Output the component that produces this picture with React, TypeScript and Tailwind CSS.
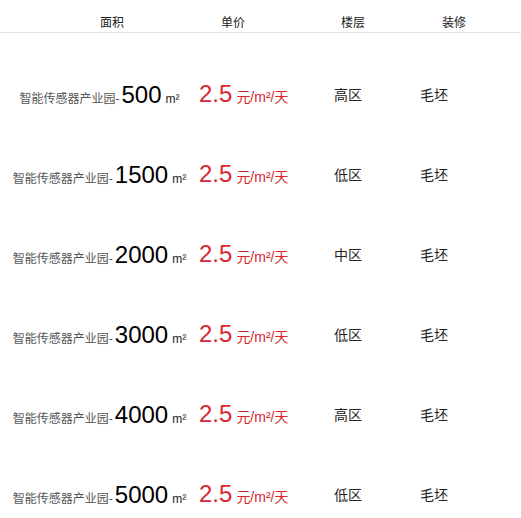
const rows = [
  { area: "500", floor: "高区" },
  { area: "1500", floor: "低区" },
  { area: "2000", floor: "中区" },
  { area: "3000", floor: "低区" },
  { area: "4000", floor: "高区" },
  { area: "5000", floor: "低区" },
];

export default function App() {
  return (
    <div
      className="w-[521px] bg-white text-[#333]"
      style={{ fontFamily: '"Liberation Sans", Arial, "Noto Sans CJK SC", sans-serif' }}
    >
      <div className="flex h-[33px] items-start border-b border-[#e5e5e5] pt-[15px] pl-[52px] text-[12px] leading-[16px] text-[#222]">
        <div className="w-[120px] text-center">面积</div>
        <div className="w-[122px] text-center">单价</div>
        <div className="w-[118px] text-center">楼层</div>
        <div className="w-[84px] text-center">装修</div>
      </div>
      <div className="pt-[22px]">
        {rows.map((r, i) => (
          <div key={i} className="flex h-[80px] items-center">
            <div className="flex w-[199px] items-baseline justify-center whitespace-nowrap">
              <span className="text-[12px] text-[#555]">智能传感器产业园-</span>
              <span className="ml-[2px] text-[24px] leading-none text-black">{r.area}</span>
              <span className="ml-[4px] text-[12px] text-[#222]">m²</span>
            </div>
            <div className="flex w-[121px] items-baseline whitespace-nowrap text-[#d9262c]">
              <span className="text-[24px] leading-none">2.5</span>
              <span className="ml-[4px] text-[14px]">元/m²/天</span>
            </div>
            <div className="w-[56px] text-center text-[14px] text-[#222]">{r.floor}</div>
            <div className="w-[116px] text-center text-[14px] text-[#222]">毛坯</div>
          </div>
        ))}
      </div>
    </div>
  );
}
